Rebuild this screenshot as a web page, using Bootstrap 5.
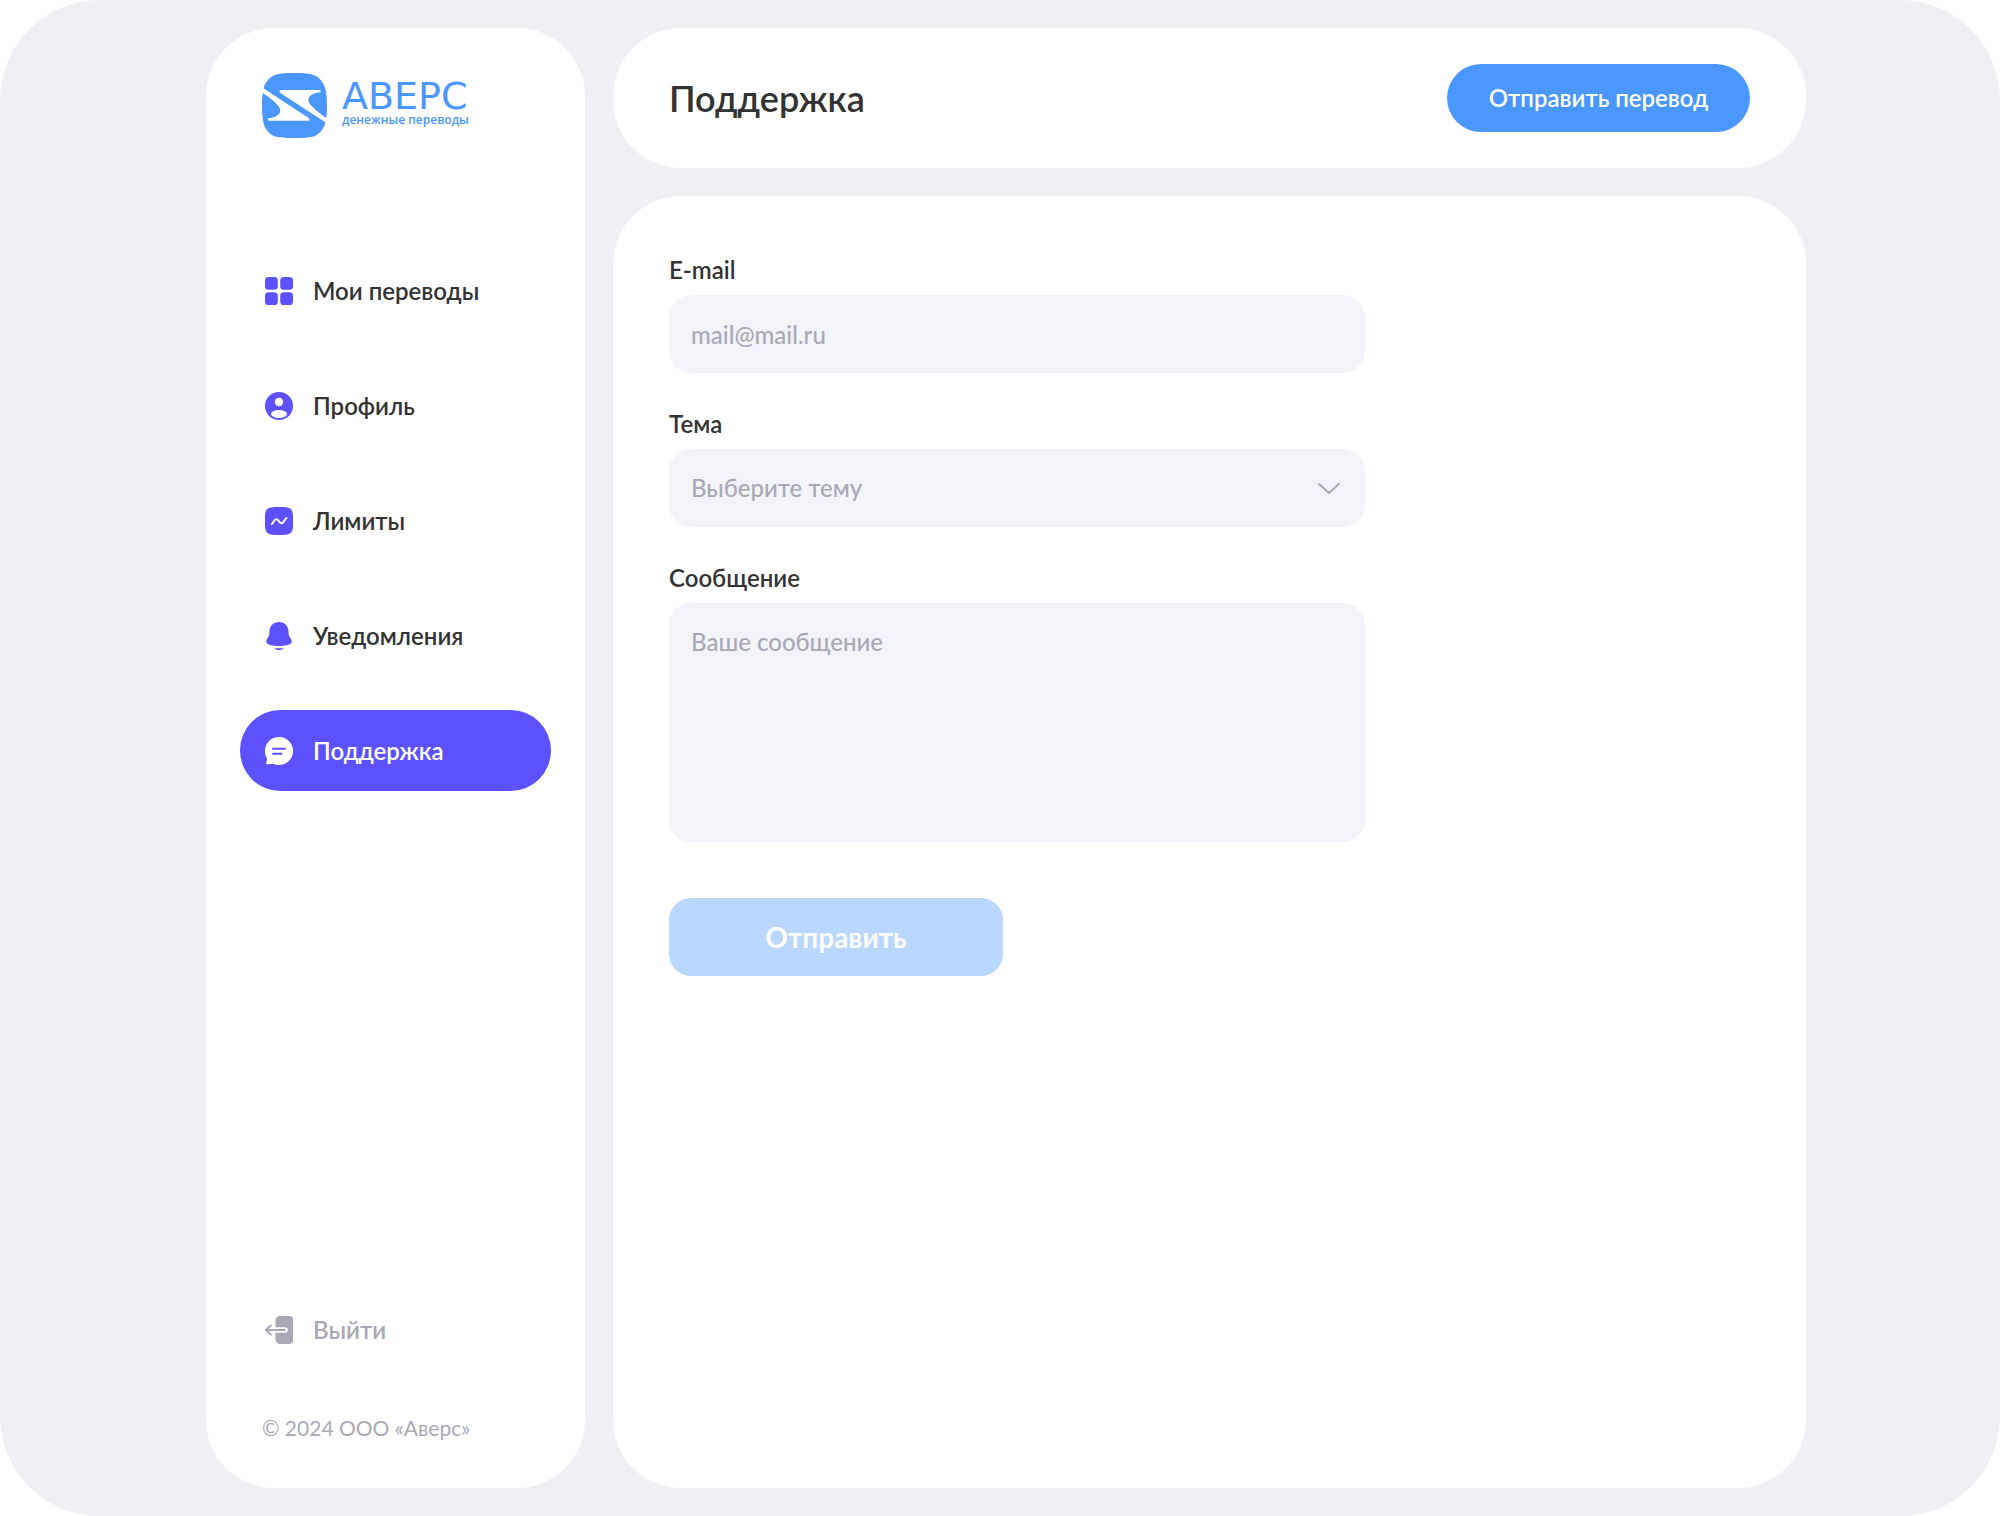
<!DOCTYPE html>
<html lang="ru">
<head>
<meta charset="utf-8">
<meta name="viewport" content="width=device-width, initial-scale=1">
<title>Аверс — Поддержка</title>
<link rel="stylesheet" href="https://cdn.jsdelivr.net/npm/bootstrap@5.3.0/dist/css/bootstrap.min.css">
<style>
  :root { --violet: #5d51ff; --blue: #4997ff; --blue-off: #b9d7ff; --ink: #333; --muted: #a9a9b5; --field: #f3f4fa; --shell: #f0eff4; }
  body { font-family: Lato, "Noto Sans", sans-serif; font-size: 24px; line-height: 28px; color: var(--ink); background: #fff; }
  .shell { background: var(--shell); border-radius: 100px; padding: 28px 194px 28px 206px; gap: 28px; }
  .panel { background: #fff; border-radius: 68px; }
  .side { flex: 0 0 379px; padding: 45px 34px 46px; }
  .brand { gap: 15px; padding-left: 22px; margin-bottom: 112px; color: var(--blue); }
  .brand:hover { color: var(--blue); }
  .brand-name { font: 500 38px/28px "DejaVu Sans", sans-serif; }
  .brand-sub { font: 600 12px/20px "Open Sans", sans-serif; }
  .main-col { gap: 28px; }
  .menu { gap: 34px; }
  .menu .nav-link { gap: 20px; height: 81px; padding: 0 25px; border-radius: 41px; color: var(--ink); font-weight: 600; }
  .menu svg { color: var(--violet); flex: none; }
  .menu .nav-link.active { background: var(--violet); color: #fff; }
  .menu .active svg { color: #fff; }
  .menu .leave, .menu .leave svg { color: var(--muted); }
  .copyright { margin: 44px 0 0 22px; font-size: 21px; color: var(--muted); }
  .top-bar { min-height: 140px; padding: 0 56px; }
  .page-title { font-size: 36px; line-height: 40px; font-weight: 600; }
  .btn-send { height: 68px; width: 303px; border-radius: 34px; font-size: 24px; font-weight: 600; background: var(--blue); color: #fff; border: 0; }
  .btn-send:hover { background: var(--violet); color: #fff; }
  .work { padding: 60px 56px; }
  .support { max-width: 696px; }
  .support .form-label { display: block; margin-bottom: 11px; font-weight: 600; }
  .support .group { margin-bottom: 37px; }
  .support .form-control, .support .form-select { height: 78px; padding: 25px 22px; border: 0; border-radius: 22px; font-size: 24px; line-height: 28px; font-weight: 500; background-color: var(--field); color: var(--ink); }
  .support .form-select { color: var(--muted); background-image: none; }
  .support textarea.form-control { height: 239px; resize: none; }
  .support .form-control::placeholder { color: var(--muted); opacity: 1; }
  .chevron { right: 24px; top: 34px; pointer-events: none; }
  .btn-submit { width: 334px; height: 78px; margin-top: 19px; border: 0; border-radius: 22px; font-size: 28px; font-weight: 700; }
  .btn-submit:disabled { background: var(--blue-off); color: #fff; opacity: 1; }
  @media (max-width: 1500px) { .shell { padding: 28px; } }
  @media (max-width: 991px) { .shell { flex-direction: column; border-radius: 40px; padding: 16px; } .side { flex: none; } .top-bar { flex-wrap: wrap; gap: 16px; padding: 24px; } }
</style>
</head>
<body>
<div class="shell d-flex min-vh-100">
  <aside class="side panel d-flex flex-column">
    <a href="#" class="brand d-flex align-items-center text-decoration-none">
      <svg width="65" height="65" viewBox="0 0 195 195" aria-hidden="true">
        <path fill="currentColor" d="M97 0c25 0 50 1 63 8 14 7 25 22 29 36 5 17 6 35 6 54s-1 37-6 54c-4 14-15 29-29 36-13 6-38 7-63 7s-50-1-63-7c-14-7-25-22-29-36-4-17-5-35-5-54s1-37 5-54c4-14 15-29 29-36C47 1 72 0 97 0z"/>
        <path fill="#fff" d="M3 45 141 136q4 5-2 7H21q-6-3-2-7c26-2 39-15 35-28C50 93 18 70-1 58zM192 149 54 59q-4-5 2-8H173q6 3 2 7c-26 2-39 14-35 28 4 13 36 38 55 50z"/>
      </svg>
      <span class="d-flex flex-column">
        <span class="brand-name">АВЕРС</span>
        <span class="brand-sub">денежные переводы</span>
      </span>
    </a>
    <nav class="menu nav flex-column flex-grow-1">
      <a href="#" class="nav-link d-flex align-items-center">
        <svg width="28" height="28" viewBox="0 0 28 28" fill="currentColor" aria-hidden="true"><rect width="12.8" height="12.8" rx="3.6"/><rect x="15.2" width="12.8" height="12.8" rx="3.6"/><rect y="15.2" width="12.8" height="12.8" rx="3.6"/><rect x="15.2" y="15.2" width="12.8" height="12.8" rx="3.6"/></svg>
        Мои переводы
      </a>
      <a href="#" class="nav-link d-flex align-items-center">
        <svg width="28" height="28" viewBox="0 0 28 28" aria-hidden="true"><circle cx="14" cy="14" r="14" fill="currentColor"/><circle cx="14" cy="10" r="4.2" fill="#fff"/><ellipse cx="14" cy="22" rx="8" ry="4" fill="#fff"/></svg>
        Профиль
      </a>
      <a href="#" class="nav-link d-flex align-items-center">
        <svg width="28" height="28" viewBox="0 0 28 28" aria-hidden="true"><path fill="currentColor" d="M14 0c5 0 9 0 11.200 1.500C27.500 3.500 28 6 28 9v10c0 3-.5 5.500-2.800 7.300C23 28 19 28 14 28S5 28 2.800 26.300C.5 24.500 0 22 0 19V9c0-3 .5-5.500 2.800-7.500C5 0 9 0 14 0z"/><path d="M6.800 17.200 9.800 13q1.500-1.800 3 0l2.400 2.600q1.500 1.400 2.900-.3l3.300-4.300" fill="none" stroke="#fff" stroke-width="1.900" stroke-linecap="round"/></svg>
        Лимиты
      </a>
      <a href="#" class="nav-link d-flex align-items-center">
        <svg width="28" height="28" viewBox="0 0 28 28" fill="currentColor" aria-hidden="true"><path d="M14 0C8.300 0 4.500 4.200 4.500 9.500c0 3.300-.7 4.800-1.900 6.500C1.400 17.700.8 19 1.600 20.800 2.800 23.200 8 24 14 24s11.200-.8 12.400-3.200c.8-1.800.2-3.100-1-4.800-1.200-1.700-1.900-3.200-1.900-6.500C23.500 4.200 19.700 0 14 0z"/><path d="M9.300 26q4.700.5 9.400 0Q16.500 28.300 14 28.300T9.300 26z"/></svg>
        Уведомления
      </a>
      <a href="#" class="nav-link active d-flex align-items-center" aria-current="page">
        <svg width="28" height="28" viewBox="0 0 28 28" aria-hidden="true"><path fill="currentColor" d="M14 0a14 14 0 1 1-5.800 26.700Q6 26.500 2.400 27.400.8 27.600 1.200 26q.9-2.800.7-4.800A14 14 0 0 1 14 0z"/><path d="M8 11.700h12M8 16.700h8.500" stroke="#5d51ff" stroke-width="1.900" stroke-linecap="round"/></svg>
        Поддержка
      </a>
      <a href="#" class="nav-link leave d-flex align-items-center mt-auto">
        <svg width="28" height="28" viewBox="0 0 28 28" aria-hidden="true"><rect x="10.500" width="18" height="28" rx="4.500" fill="currentColor"/><path d="M9 14h11" stroke="#fff" stroke-width="5.600" stroke-linecap="round"/><path d="M20 14H.8M5.800 9.500.8 14l5 4.500" fill="none" stroke="currentColor" stroke-width="1.900" stroke-linecap="round" stroke-linejoin="round"/></svg>
        Выйти
      </a>
    </nav>
    <p class="copyright">© 2024 ООО «Аверс»</p>
  </aside>
  <div class="main-col d-flex flex-column flex-grow-1">
    <header class="top-bar panel d-flex align-items-center justify-content-between">
      <h1 class="page-title mb-0">Поддержка</h1>
      <button type="button" class="btn btn-send">Отправить перевод</button>
    </header>
    <main class="work panel flex-grow-1">
      <form class="support">
        <div class="group">
          <label class="form-label" for="email">E-mail</label>
          <input type="email" class="form-control" id="email" placeholder="mail@mail.ru">
        </div>
        <div class="group">
          <label class="form-label" for="topic">Тема</label>
          <div class="position-relative">
            <select class="form-select" id="topic"><option>Выберите тему</option></select>
            <svg class="chevron position-absolute" width="24" height="12" viewBox="0 0 24 12" aria-hidden="true"><path d="M2 1l10 9L22 1" fill="none" stroke="#a9a9b5" stroke-width="2" stroke-linecap="round" stroke-linejoin="round"/></svg>
          </div>
        </div>
        <div class="group">
          <label class="form-label" for="message">Сообщение</label>
          <textarea class="form-control" id="message" placeholder="Ваше сообщение"></textarea>
        </div>
        <button type="submit" class="btn btn-submit" disabled>Отправить</button>
      </form>
    </main>
  </div>
</div>
<script src="https://cdn.jsdelivr.net/npm/bootstrap@5.3.0/dist/js/bootstrap.bundle.min.js"></script>
</body>
</html>
